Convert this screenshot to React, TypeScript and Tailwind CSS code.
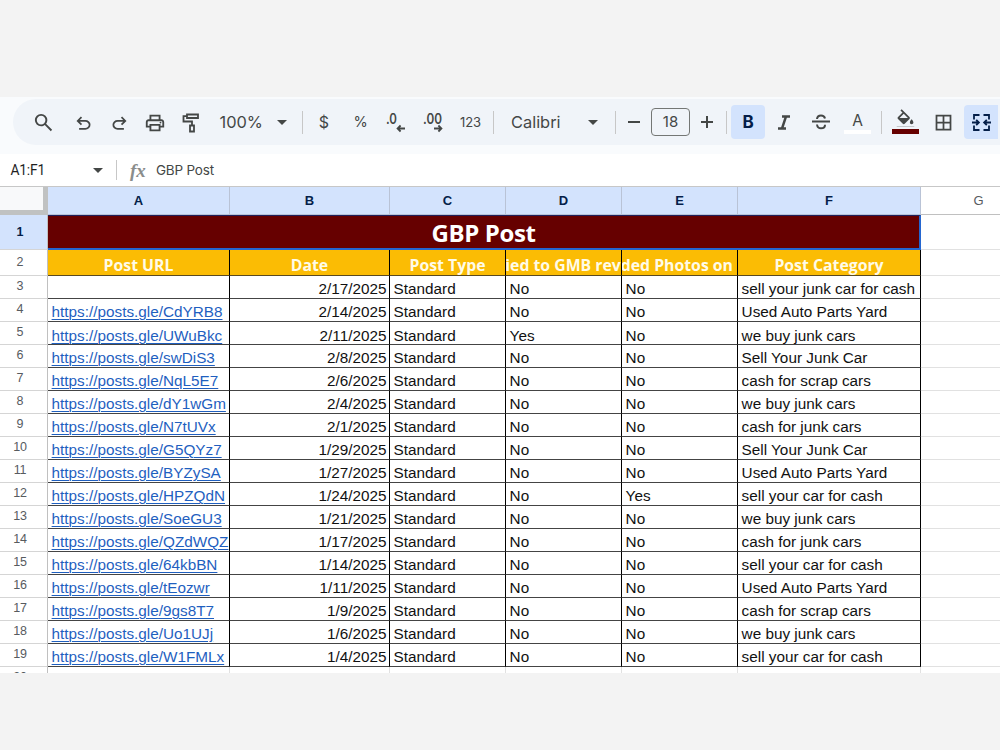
import { ReactNode } from "react";
import { MdBorderAll, MdFormatColorFill, MdOutlinePrint } from "react-icons/md";

const posts = [
  { url: "", date: "2/17/2025", replied: "No", photos: "No", category: "sell your junk car for cash" },
  { url: "CdYRB8", date: "2/14/2025", replied: "No", photos: "No", category: "Used Auto Parts Yard" },
  { url: "UWuBkc", date: "2/11/2025", replied: "Yes", photos: "No", category: "we buy junk cars" },
  { url: "swDiS3", date: "2/8/2025", replied: "No", photos: "No", category: "Sell Your Junk Car" },
  { url: "NqL5E7", date: "2/6/2025", replied: "No", photos: "No", category: "cash for scrap cars" },
  { url: "dY1wGm", date: "2/4/2025", replied: "No", photos: "No", category: "we buy junk cars" },
  { url: "N7tUVx", date: "2/1/2025", replied: "No", photos: "No", category: "cash for junk cars" },
  { url: "G5QYz7", date: "1/29/2025", replied: "No", photos: "No", category: "Sell Your Junk Car" },
  { url: "BYZySA", date: "1/27/2025", replied: "No", photos: "No", category: "Used Auto Parts Yard" },
  { url: "HPZQdN", date: "1/24/2025", replied: "No", photos: "Yes", category: "sell your car for cash" },
  { url: "SoeGU3", date: "1/21/2025", replied: "No", photos: "No", category: "we buy junk cars" },
  { url: "QZdWQZ", date: "1/17/2025", replied: "No", photos: "No", category: "cash for junk cars" },
  { url: "64kbBN", date: "1/14/2025", replied: "No", photos: "No", category: "sell your car for cash" },
  { url: "tEozwr", date: "1/11/2025", replied: "No", photos: "No", category: "Used Auto Parts Yard" },
  { url: "9gs8T7", date: "1/9/2025", replied: "No", photos: "No", category: "cash for scrap cars" },
  { url: "Uo1UJj", date: "1/6/2025", replied: "No", photos: "No", category: "we buy junk cars" },
  { url: "W1FMLx", date: "1/4/2025", replied: "No", photos: "No", category: "sell your car for cash" },
];

const columns = "grid grid-cols-[48px_182px_160px_116px_116px_116px_183px_79px]";

export default function App() {
  return (
    <main className="h-[750px] w-[1000px] overflow-hidden bg-[#f3f3f3] pt-[97px] font-['Liberation_Sans',sans-serif]">
      <div className="h-[576px] overflow-hidden bg-white">
        <Toolbar />
        <FormulaBar />
        <Sheet />
      </div>
    </main>
  );
}

function Toolbar() {
  return (
    <div className="h-[57px] bg-[#f9fbfd] pt-[2px] pl-[13px] font-['Inter',sans-serif] text-[#444746]">
      <div className="flex h-[46px] items-center rounded-l-[23px] bg-[#f0f4f9]">
        <Slot className="ml-[9px] w-[43px]">
          <SymbolIcon size={23} path="M784-120 532-372q-30 24-69 38t-83 14q-109 0-184.5-75.5T120-580q0-109 75.5-184.5T380-840q109 0 184.5 75.5T640-580q0 44-14 83t-38 69l252 252-56 56ZM380-400q75 0 127.5-52.5T560-580q0-75-52.5-127.5T380-760q-75 0-127.5 52.5T200-580q0 75 52.5 127.5T380-400Z" />
        </Slot>
        <Slot className="w-[36px] pt-[3px]">
          <SymbolIcon size={21} path="M280-200v-80h284q63 0 109.5-40T720-420q0-60-46.5-100T564-560H312l104 104-56 56-200-200 200-200 56 56-104 104h252q97 0 169.5 63T800-420q0 94-72.5 157T564-200H280Z" />
        </Slot>
        <Slot className="w-[36px] pt-[3px]">
          <SymbolIcon size={21} path="M396-200q-97 0-169.5-63T160-420q0-94 66.5-157T396-640h252L544-744l56-56 200 200-200 200-56-56 104-104H396q-63 0-109.5 40T240-420q0 60 46.5 100T396-280h284v80H396Z" />
        </Slot>
        <Slot className="w-[36px] pt-px">
          <MdOutlinePrint size={22} />
        </Slot>
        <Slot className="w-[36px] pt-px">
          <PaintRollerIcon />
        </Slot>
        <span className="ml-[10.5px] w-[57.5px] text-[16.4px]">100%</span>
        <Caret />
        <Divider className="ml-[15px]" />
        <Slot className="w-[42px] text-[16px]">$</Slot>
        <Slot className="w-[31px] text-[14.5px]">%</Slot>
        <Slot className="w-[39px]">
          <DecimalIcon digits=".0" arrow="M19 17.5h-7m2.6-3L11.6 17.5l3 3" />
        </Slot>
        <Slot className="w-[35px]">
          <DecimalIcon digits=".00" arrow="M11 17.5h7m-2.6-3l3 3l-3 3" />
        </Slot>
        <Slot className="w-[41px] pt-px text-[13px]">123</Slot>
        <Divider className="ml-[2px]" />
        <span className="ml-[17px] w-[77px] text-[16.4px]">Calibri</span>
        <Caret />
        <Divider className="ml-[17px]" />
        <Slot className="w-[35px]">
          <svg width="12" height="12" stroke="currentColor" strokeWidth="2">
            <path d="M0 6h12" />
          </svg>
        </Slot>
        <span className="flex h-7 w-[39px] items-center justify-center rounded-[4px] border border-[#747775] text-[15px]">18</span>
        <Slot className="w-[33px]">
          <svg width="12" height="12" stroke="currentColor" strokeWidth="2">
            <path d="M0 6h12M6 0v12" />
          </svg>
        </Slot>
        <Divider className="ml-[3px]" />
        <Slot className="ml-[4px] h-[34px] w-[34px] rounded-[4px] bg-[#d3e3fd] pt-px text-[17px] font-bold text-[#041e49]">B</Slot>
        <Slot className="w-[38px] pt-px">
          <svg width="12" height="15" fill="none" stroke="currentColor" strokeWidth="2.4">
            <path d="M4 1.5h8M0 13.5h8M8 1.5l-4 12" />
          </svg>
        </Slot>
        <Slot className="w-[35px]">
          <StrikeIcon />
        </Slot>
        <Slot className="w-[39px] flex-col gap-[2px] pt-px">
          <span className="h-[17px] text-[15.5px] leading-[19px]">A</span>
          <span className="h-1 w-[27px] bg-white" />
        </Slot>
        <Divider className="ml-[4px]" />
        <Slot className="w-[46px] flex-col pb-[2px]">
          <MdFormatColorFill size={21} viewBox="0 0 24 20" className="h-[18px]" />
          <span className="mt-[2px] h-[5px] w-[27px] bg-[#660000]" />
        </Slot>
        <Slot className="w-[30px] pt-px">
          <MdBorderAll size={21} />
        </Slot>
        <Slot className="ml-[6px] h-[34px] w-[34px] rounded-l-[4px] bg-[#d3e3fd] text-[#041e49]">
          <MergeIcon />
        </Slot>
      </div>
    </div>
  );
}

function FormulaBar() {
  return (
    <div className="flex h-[33px] items-center border-b border-[#c7c7c7] pl-[10.5px] font-['Inter',sans-serif] text-[13.5px] tracking-[-0.2px] text-[#1f1f1f]">
      <span className="w-[82.5px] font-['Roboto',sans-serif] text-[13.8px]">A1:F1</span>
      <Caret />
      <span className="ml-[13px] h-[20px] w-px bg-[#c7c7c7]" />
      <span className="ml-[13px] w-[26px] font-['Liberation_Serif',serif] text-[19px] leading-none font-bold text-[#8a8d8c] italic">fx</span>
      <span className="text-[#444746]">GBP Post</span>
    </div>
  );
}

function Sheet() {
  return (
    <div>
      <div className={`${columns} h-7 text-[13px] font-bold text-[#041e49]`}>
        <div className="border-r-[5px] border-b-[5px] border-[#c0c2c2] bg-[#f8f9fa]" />
        {["A", "B", "C", "D", "E", "F"].map((name) => (
          <div key={name} className="flex items-center justify-center border-r border-b border-[#b9c3d6] bg-[#d3e3fd]">
            {name}
          </div>
        ))}
        <div className="flex items-center border-b border-[#c0c0c0] pl-[52.5px] font-normal text-[#575b5f]">G</div>
      </div>

      <div className="grid h-[35px] grid-cols-[48px_873px_79px]">
        <RowNumber className="bg-[#d3e3fd] font-bold text-[#041e49]">1</RowNumber>
        <div className="flex items-center justify-center border-t border-r-2 border-b-2 border-t-[#20205c] border-r-[#2466d0] border-b-[#2466d0] bg-[#660000] pt-[2px] font-['Open_Sans',sans-serif] text-[24px] leading-none font-bold tracking-[-0.4px] text-white">
          GBP Post
        </div>
        <div className="border-b border-[#e1e1e1]" />
      </div>

      <div className={`${columns} h-[26px]`}>
        <RowNumber className="text-[#575b5f]">2</RowNumber>
        <HeaderCell>Post URL</HeaderCell>
        <HeaderCell>Date</HeaderCell>
        <HeaderCell>Post Type</HeaderCell>
        <HeaderCell>Replied to GMB reviews</HeaderCell>
        <HeaderCell>Added Photos on GB</HeaderCell>
        <HeaderCell>Post Category</HeaderCell>
        <div className="border-b border-[#e1e1e1]" />
      </div>

      {posts.map((post, i) => (
        <div key={i} className={`${columns} h-[23px]`}>
          <RowNumber className="pb-[2px] text-[#575b5f]">{i + 3}</RowNumber>
          <Cell low={i === 2}>
            {post.url && (
              <a className="text-[#1f5fbf] underline decoration-1 underline-offset-2">https://posts.gle/{post.url}</a>
            )}
          </Cell>
          <Cell low={i === 2} right>{post.date}</Cell>
          <Cell low={i === 2}>Standard</Cell>
          <Cell low={i === 2}>{post.replied}</Cell>
          <Cell low={i === 2}>{post.photos}</Cell>
          <Cell low={i === 2}>{post.category}</Cell>
          <div className="border-b border-[#e1e1e1]" />
        </div>
      ))}

      <div className={`${columns} h-[23px]`}>
        <RowNumber className="pb-[2px] text-[#575b5f]">20</RowNumber>
        {[0, 1, 2, 3, 4, 5].map((n) => (
          <div key={n} className="border-r border-[#e1e1e1]" />
        ))}
      </div>
    </div>
  );
}

function RowNumber({ className, children }: { className: string; children: ReactNode }) {
  return (
    <div className={`flex items-center justify-center border-r border-b border-r-[#c0c0c0] border-b-[#d5d5d5] pr-[7px] text-[12.5px] tracking-[-0.2px] ${className}`}>
      {children}
    </div>
  );
}

function HeaderCell({ children }: { children: ReactNode }) {
  return (
    <div className="flex justify-center overflow-hidden border-r border-b border-r-black border-b-[#5a4a20] bg-[#fbbc04] pt-[5px] font-['Open_Sans',sans-serif] text-[15.8px] leading-[20px] font-bold whitespace-nowrap text-[#fffbe8]">
      {children}
    </div>
  );
}

function Cell({ low, right, children }: { low?: boolean; right?: boolean; children: ReactNode }) {
  return (
    <div
      className={`overflow-hidden border-r border-b border-r-black border-b-[#444] pr-[2.5px] pl-[3.6px] text-[15.3px] leading-[18px] whitespace-nowrap text-[#111] ${low ? "pt-[5px]" : "pt-[4px]"} ${right ? "text-right" : ""}`}
    >
      {children}
    </div>
  );
}

function Slot({ className, children }: { className: string; children: ReactNode }) {
  return <div className={`flex shrink-0 items-center justify-center ${className}`}>{children}</div>;
}

function Divider({ className = "" }: { className?: string }) {
  return <span className={`h-[23px] w-px shrink-0 bg-[#c7c7c7] ${className}`} />;
}

function Caret() {
  return (
    <svg width="10" height="5" viewBox="0 0 10 5" fill="#444746" className="shrink-0">
      <path d="M0 0h10L5 5z" />
    </svg>
  );
}

function SymbolIcon({ path, size }: { path: string; size: number }) {
  return (
    <svg width={size} height={size} viewBox="0 -960 960 960" fill="currentColor">
      <path d={path} />
    </svg>
  );
}

function PaintRollerIcon() {
  return (
    <svg width="18" height="20" viewBox="0 0 18 20" fill="none" stroke="currentColor" strokeWidth="1.8">
      <path d="M5 1.5h11v3.5H5zM5 3.2H1.5v5.3H10v4M8 12.5h4v6H8z" />
    </svg>
  );
}

function DecimalIcon({ digits, arrow }: { digits: string; arrow: string }) {
  return (
    <svg width="20" height="22" viewBox="0 0 20 22" fill="none" stroke="currentColor" strokeWidth="1.8" className="overflow-visible">
      <text x="0" y="12.5" fontSize="14.5" fontWeight="600" textLength={digits.length === 2 ? 11 : 19} lengthAdjust="spacingAndGlyphs" fill="currentColor" stroke="none">
        {digits}
      </text>
      <path d={arrow} />
    </svg>
  );
}

function StrikeIcon() {
  return (
    <svg width="18" height="16" viewBox="0 0 18 16" fill="none" stroke="currentColor" strokeWidth="2">
      <path d="M0 7.5h18M13 4.5C12.5 2.5 11 1.5 9 1.5S5.3 2.5 5 5M5 10.5c.3 2.5 2 3.8 4 3.8s4-1 4-3.6" />
    </svg>
  );
}

function MergeIcon() {
  return (
    <svg width="19" height="17" viewBox="0 0 19 17" fill="none" stroke="currentColor" strokeWidth="1.8">
      <path d="M7.5 1H2v4.5M2 11.5V16h5.5M11.5 1H17v4.5M17 11.5V16h-5.5M0 8.5h6M4.2 5.8l2.7 2.7-2.7 2.7M19 8.5h-6M14.8 5.8l-2.7 2.7 2.7 2.7" />
    </svg>
  );
}
